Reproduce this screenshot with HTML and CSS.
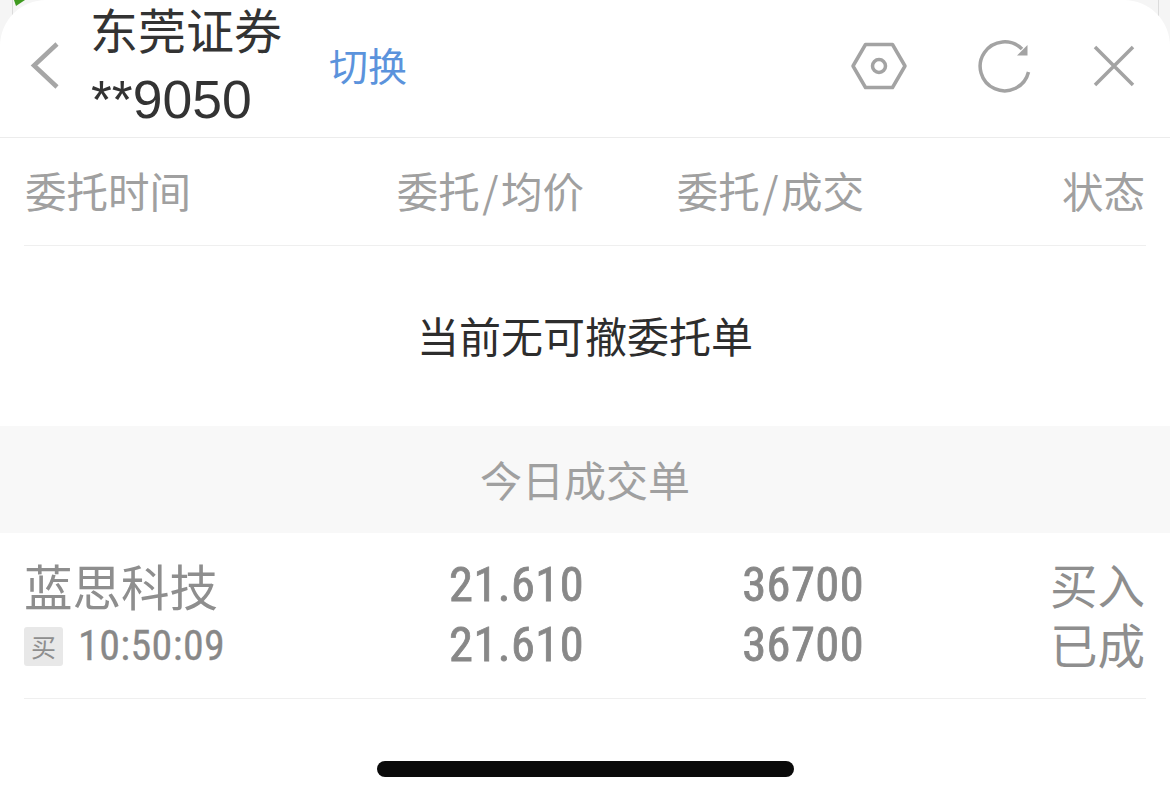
FILE: index.html
```html
<!DOCTYPE html>
<html lang="zh-CN">
<head>
    <meta charset="UTF-8">
    <meta name="viewport" content="width=device-width, initial-scale=1.0">
    <title>东莞证券</title>
    <link rel="stylesheet" href="styles.css">
</head>
<body>
    <div class="backdrop-green"></div>
    <div class="backdrop-line-left"></div>
    <div class="backdrop-line-right"></div>
    <div class="sheet">
        <!-- 顶部栏 -->
        <div class="topbar">
            <svg class="icon-back" width="30" height="50" viewBox="0 0 30 50">
                <path d="M27 3 L4 24.500 L27 46" fill="none" stroke="#a6a6a6" stroke-width="4.500"/>
            </svg>
            <div class="account">
                <div class="account-name">东莞证券</div>
                <div class="account-no">**9050</div>
            </div>
            <div class="switch">切换</div>
            <div class="topbar-icons">
                <svg class="icon-hex" width="58" height="50" viewBox="0 0 58 50">
                    <path d="M15.500 3.500 H42.500 L55 25 L42.500 46.500 H15.500 L3 25 Z" fill="none" stroke="#a3a3a3" stroke-width="3.500" stroke-linejoin="round"/>
                    <circle cx="29" cy="25" r="6.500" fill="none" stroke="#a3a3a3" stroke-width="3.500"/>
                </svg>
                <svg class="icon-refresh" width="54" height="54" viewBox="0 0 54 54">
                    <path d="M44 10 A24.500 24.500 0 1 0 50.500 33" fill="none" stroke="#a3a3a3" stroke-width="3.500"/>
                    <path d="M49.500 6 V16.500 H39 Z" fill="#a3a3a3"/>
                </svg>
                <svg width="44" height="44" viewBox="0 0 44 44">
                    <path d="M3 3 L41 41 M41 3 L3 41" fill="none" stroke="#a3a3a3" stroke-width="3.500"/>
                </svg>
            </div>
        </div>

        <!-- 表头 -->
        <div class="row head-row">
            <div class="cell-left">委托时间</div>
            <div>委托<span class="slash">/</span>均价</div>
            <div>委托<span class="slash">/</span>成交</div>
            <div class="head-status">状态</div>
        </div>

        <div class="empty">当前无可撤委托单</div>
        <div class="band">今日成交单</div>

        <!-- 成交记录 -->
        <div class="row deal-row">
            <div class="cell-left">
                <div class="stock-name">蓝思科技</div>
                <div class="stock-time"><span class="tag">买</span><span class="num">10:50:09</span></div>
            </div>
            <div class="num stacked"><div>21.610</div><div>21.610</div></div>
            <div class="num stacked"><div>36700</div><div>36700</div></div>
            <div class="stacked status"><div>买入</div><div>已成</div></div>
        </div>

        <div class="home-wrap"><div class="home-bar"></div></div>
    </div>
</body>
</html>
```

FILE: styles.css
```css
/* 页面基础 */
html, body {
    margin: 0;
    height: 800px;
    overflow: hidden;
}
body {
    position: relative;
    background-color: #f5f5f5;
    font-family: "Noto Sans CJK SC", "Liberation Sans", sans-serif;
    color: #8e8e8e;
}
.backdrop-green {
    position: absolute;
    top: 0;
    left: 14px;
    width: 11px;
    height: 6px;
    background-color: #3f9a1f;
    clip-path: polygon(0 0, 100% 0, 2px 100%);
}
.backdrop-line-left,
.backdrop-line-right {
    position: absolute;
    top: 0;
    width: 1px;
    height: 20px;
    background-color: #dcdcdc;
}
.backdrop-line-left {
    left: 12px;
}
.backdrop-line-right {
    left: 1158px;
}
.sheet {
    position: relative;
    height: 800px;
    background-color: #fff;
    border-radius: 46px 46px 0 0;
}
.topbar {
    display: flex;
    align-items: center;
    height: 138px;
    padding: 0 34px 6px 30px;
    box-sizing: border-box;
    border-bottom: 1px solid #ececec;
}
.icon-back {
    margin-right: 30px;
}
.account {
    align-self: flex-start;
    color: #333;
    font-family: "Liberation Sans", "Noto Sans CJK SC", sans-serif;
}
.account-name {
    font-size: 48px;
    line-height: 60px;
    padding-top: 3px;
}
.account-no {
    font-size: 53.500px;
    line-height: 66px;
    padding: 4px 0 0 1px;
}
.switch {
    margin-left: 47px;
    font-size: 39px;
    color: #5b93dc;
    position: relative;
    top: -2px;
}
.topbar-icons {
    margin-left: auto;
    display: flex;
    align-items: center;
    gap: 60px;
}
.icon-hex {
    margin-right: 10px;
}
.row {
    display: grid;
    grid-template-columns: 280px 280px 280px 282px;
    margin: 0 24px;
    text-align: right;
    border-bottom: 1px solid #efefef;
}
.cell-left {
    text-align: left;
}
.head-row {
    height: 108px;
    padding-bottom: 3px;
    box-sizing: border-box;
    align-items: center;
    font-size: 41.500px;
    color: #a0a0a0;
}
.head-row .cell-left {
    padding-left: 1px;
}
.head-status {
    padding-right: 1px;
}
.slash {
    padding: 0 2.500px;
}
.empty {
    height: 180px;
    line-height: 178px;
    text-align: center;
    font-size: 42px;
    color: #2d2d2d;
}
.band {
    height: 107px;
    line-height: 106px;
    text-align: center;
    font-size: 42px;
    color: #a0a0a0;
    background-color: #f8f8f8;
}
.deal-row {
    height: 166px;
    align-items: center;
    box-sizing: border-box;
}
.stock-name {
    font-size: 48.500px;
    line-height: 61px;
}
.stock-time {
    display: flex;
    align-items: center;
    gap: 15px;
    height: 61px;
}
.tag {
    width: 39px;
    height: 39px;
    line-height: 39px;
    text-align: center;
    font-size: 25px;
    border-radius: 3px;
    background-color: #e8e8e8;
}
.num {
    font-family: Roboto, "Liberation Sans", sans-serif;
    font-weight: 400;
    font-stretch: 84%;
    font-size: 48.500px;
    letter-spacing: 0.400px;
    color: #888;
    -webkit-text-stroke: 0.800px #888;
}
.stock-time .num {
    font-size: 42px;
    margin-bottom: 2px;
    -webkit-text-stroke: 0.300px #888;
}
.stacked {
    margin-top: -2px;
}
.stacked div {
    height: 60px;
    line-height: 60px;
}
.status {
    font-family: "Liberation Sans", "Noto Sans CJK SC", sans-serif;
    font-size: 47.500px;
    margin-top: 4px;
    padding-right: 1px;
}
.home-wrap {
    display: flex;
    justify-content: center;
    margin-top: 62px;
    padding-left: 1px;
}
.home-bar {
    width: 417px;
    height: 16px;
    border-radius: 8px;
    background-color: #0a0a0a;
}
```
